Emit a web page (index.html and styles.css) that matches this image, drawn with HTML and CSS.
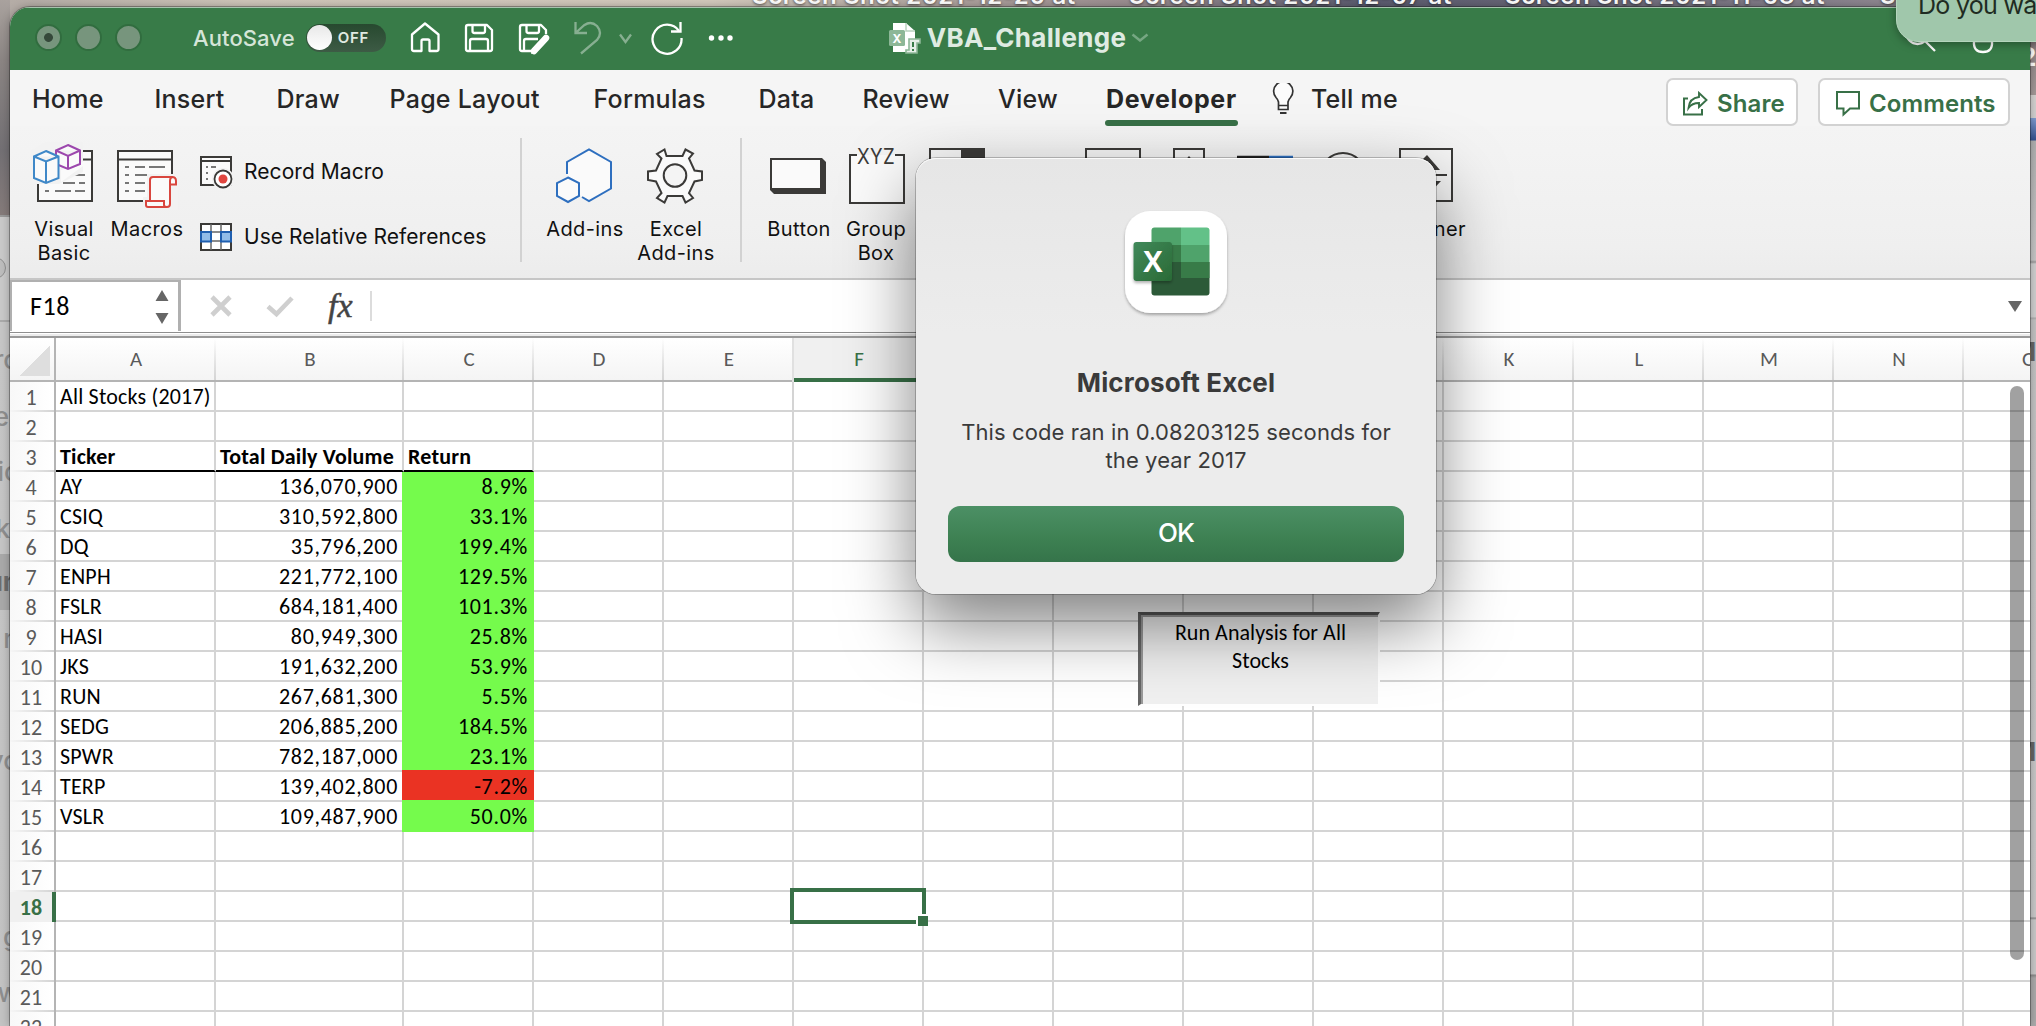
FILE: index.html
```html
<!DOCTYPE html>
<html lang="en">
<head>
<meta charset="utf-8">
<title>VBA_Challenge</title>
<link rel="stylesheet" href="styles.css">
</head>
<body>
<div class="desktop-labels"><span>Screen Shot 2021-12-20 at</span><span>Screen Shot 2021-12-07 at</span><span>Screen Shot 2021-11-08 at</span><span>S</span></div>
<div class="behind-left">
  <i class="dot"></i>
  <b style="top:343px">ro</b><b style="top:400px">er</b><b style="top:455px">ic</b><b style="top:512px">kt</b><b class="sel" style="top:564px">un</b><b style="top:622px">n</b><b style="top:744px">vo</b><b style="top:920px">g</b><b style="top:976px">w</b>
</div>
<div class="behind-right"><b style="top:40px" class="w">2</b><b style="top:335px">M</b><b style="top:735px">M</b></div>

<div class="window">
  <header class="titlebar">
    <div class="lights"><i class="edited"></i><i></i><i></i></div>
    <span class="autosave">AutoSave</span>
    <span class="toggle"><i></i>OFF</span>
    <svg class="qa" viewBox="410 20 324 36" width="324" height="36">
      <g fill="none" stroke="#fff" stroke-width="2.3" stroke-linejoin="round">
        <path d="M413 34.5L426 23.5L439.500 34.500V49q0 2-2 2H430.500V41q0-1.500-1.500-1.500H424q-1.500 0-1.500 1.500V51H415q-2 0-2-2Z"/>
        <path d="M469 25H488L493 30V49q0 2-2 2H469q-2 0-2-2V27q0-2 2-2ZM473.500 25V31q0 2 2 2H484q2 0 2-2V25M471 51V41q0-2 2-2H487q2 0 2 2V51"/>
        <path d="M532 51H523q-2 0-2-2V27q0-2 2-2H542L547 30V34M527.500 25V31q0 2 2 2H538q2 0 2-2V25M525 51V41q0-2 2-2H539"/>
      </g>
      <path d="M547 38L535 51" stroke="#fff" stroke-width="6.500" stroke-linecap="round"/><path d="M532 54L533.500 48L538 52Z" fill="#fff"/>
      <g fill="none" stroke="#fff" stroke-opacity=".4" stroke-width="2.300"><path d="M576.500 22V33H588M577 32.500L585.500 25Q592 20.500 598 26Q604 33 598 40L582 53.500"/><path d="M621 34.500L626.500 42L632 34.500"/></g>
      <g fill="none" stroke="#fff" stroke-width="2.300"><path d="M680 31A14.500 14.500 0 1 0 682.500 38"/><path d="M681.500 22V31.500H672"/></g>
      <g fill="#fff"><circle cx="712.500" cy="38" r="2.700"/><circle cx="722" cy="38" r="2.700"/><circle cx="731" cy="38" r="2.700"/></g>
    </svg>
    <div class="doc">
      <svg viewBox="889 22 34 32" width="34" height="32"><path d="M894 23H907L916 31V52H894Z" fill="#fff"/><path d="M907 23V31H916" fill="none" stroke="#b9d2be" stroke-width="1.500"/><rect x="890" y="30" width="16" height="16" rx="1.500" fill="#8db797"/><text x="898" y="42.500" text-anchor="middle" font-family="Inter" font-weight="700" font-size="12" fill="#fff">X</text><path d="M910 39H921V43H918V53H907V50H910Z" fill="#e6efe8" stroke="#8db797" stroke-width="1.600"/><path d="M914 42V47M914 49V51" stroke="#387b48" stroke-width="2"/></svg>
      <span>VBA_Challenge</span>
      <svg viewBox="1133 34 18 9" width="18" height="9"><path d="M1134.500 35.500L1142 41.500L1149.500 35.500" fill="none" stroke="#76a782" stroke-width="2.500"/></svg>
    </div>
    <svg class="right-icons" viewBox="1905 22 92 34" width="92" height="34"><g fill="none" stroke="#fff" stroke-width="2.300"><circle cx="1918.500" cy="34" r="11"/><path d="M1926 42L1936 52"/><circle cx="1984" cy="28" r="6"/><path d="M1975 42H1993Q1994 53 1984 53Q1974 53 1975 42Z"/></g></svg>
  </header>

  <nav class="tabs">
    <span>Home</span><span>Insert</span><span>Draw</span><span>Page Layout</span><span>Formulas</span><span>Data</span><span>Review</span><span>View</span><span class="active">Developer</span>
    <svg viewBox="1271 83 24 33" width="24" height="33"><path d="M1278.500 105.500V102Q1278 99.500 1276 97.500A9.600 9.600 0 1 1 1290.500 97.500Q1288.500 99.500 1288 102V105.500ZM1278.500 105.500V109.500H1288V105.500" fill="#fbfbfb" stroke="#333" stroke-width="1.700"/><path d="M1280 113H1286.500" stroke="#333" stroke-width="2"/></svg>
    <span>Tell me</span>
    <div class="actions">
      <button class="share"><svg viewBox="1682 90 26 25" width="26" height="25"><path d="M1688 97.500H1684V113.500H1702V108" fill="none" stroke="#387047" stroke-width="2"/><path d="M1699 92L1706.500 99L1699 106V102Q1692 102 1688.500 107Q1689.500 97 1699 96Z" fill="none" stroke="#387047" stroke-width="1.900"/></svg>Share</button>
      <button class="comments"><svg viewBox="1835 89 26 27" width="26" height="27"><path d="M1837 91H1859V107.500H1850L1843.500 113.500V107.500H1837Z" fill="none" stroke="#387047" stroke-width="2"/></svg>Comments</button>
    </div>
  </nav>

  <section class="ribbon">
    <div class="tool vb"><svg viewBox="32 142 64 64" width="64" height="64"><path d="M39 151H93V201H39Z" fill="#fafafa" stroke="#3b3a38" stroke-width="2"/><path d="M39 159.500H93" stroke="#3b3a38" stroke-width="2"/><path d="M76 175H86M64 183H76M80 183H86M46 191H50M56 191H72M76 191H86" stroke="#777" stroke-width="2"/><path d="M32 150L47 142H84V172L60 184H32Z" fill="#f2f2f2"/><path d="M62 182V170L84 162V166Z" fill="#fafafa"/><path d="M69 145L81 150.500V164L69 169L57 164V150.500ZM57 150.500L69 156L81 150.500M69 156V169" fill="#fafafa" stroke="#9c47ad" stroke-width="2"/><path d="M47 151L59.500 156.500V178L47 183L35 178V156.500ZM35 156.500L47 161.500L59.500 156.500M47 161.500V183" fill="#fafafa" stroke="#3f88c8" stroke-width="2"/></svg><span>Visual<br>Basic</span></div>
    <div class="tool mac"><svg viewBox="115 142 64 68" width="64" height="68"><path d="M119 151H173V201H119Z" fill="#fafafa" stroke="#3b3a38" stroke-width="2"/><path d="M119 159.500H173" stroke="#3b3a38" stroke-width="2"/><path d="M126 167H130M136 167H146M150 167H166M126 175H130M136 175H150M154 175H166M126 183H130M136 183H146M126 191H130M136 191H146" stroke="#777" stroke-width="2"/><path d="M148 174H180V210H144V197H148Z" fill="#f2f2f2"/><path d="M151 200V180Q151 177 154 177H173Q177 177 177 181V184.500H171V204Q171 207 168 207H149Q147 207 147 205V201H165V205Q165 207 168 207M171 184.500V181Q171 177 174 177" fill="#fafafa" stroke="#d9463e" stroke-width="2"/></svg><span>Macros</span></div>
    <div class="stack">
      <div><svg viewBox="199 155 34 34" width="34" height="34"><path d="M201 157H231V185H201Z" fill="#fafafa" stroke="#3b3a38" stroke-width="2"/><path d="M201 161H231" stroke="#3b3a38" stroke-width="2"/><path d="M206 167H208M211 167H216M206 173H208M206 179H208" stroke="#777" stroke-width="2"/><circle cx="223" cy="179" r="11" fill="#f2f2f2"/><circle cx="223" cy="179" r="8.500" fill="#fff" stroke="#3b3a38" stroke-width="1.800"/><circle cx="223" cy="179" r="4.500" fill="#e0463f"/></svg>Record Macro</div>
      <div><svg viewBox="199 220 34 32" width="34" height="32"><path d="M201 223H231V249H201Z" fill="#fff" stroke="#3b3a38" stroke-width="2"/><path d="M211 223V249M221 223V249M201 231H231M201 240H231" stroke="#666" stroke-width="1.500"/><path d="M201 231H211V240.500H201ZM221 231H231V240.500H221Z" fill="#91bce8" stroke="#1f5fb0" stroke-width="2"/></svg>Use Relative References</div>
    </div>
    <i class="sep"></i>
    <div class="tool add"><svg viewBox="554 146 60 60" width="60" height="60"><path d="M567 174V162L589 149.500L611 162V188.500L589 201L582 197" fill="#fafafa" stroke="#2e6fbf" stroke-width="2"/><path d="M567 174L582 197V180Z" fill="#fafafa"/><path d="M568 177.500L579 183V196L568 202L557 196V183Z" fill="#fafafa" stroke="#2e6fbf" stroke-width="2"/></svg><span>Add-ins</span></div>
    <div class="tool xadd"><svg viewBox="645 146 60 60" width="60" height="60"><path d="M666.500 156L664.500 149.500L657 154L661.500 158.500L656 170.500L648 171.500V180L656 181.500L661.500 193L657 198L664.500 202.500L667.500 196H682.500L685.500 202.500L693 198L689 193L694.500 181.500L702 180V171.500L694.500 170.500L689 158.500L693 153.500L685.500 149.500L682.500 156Z" fill="#fafafa" stroke="#3b3a38" stroke-width="2"/><circle cx="675" cy="175.500" r="11.300" fill="#f4f4f4" stroke="#3b3a38" stroke-width="2"/></svg><span>Excel<br>Add-ins</span></div>
    <i class="sep s2"></i>
    <div class="tool btn"><svg viewBox="768 154 60 44" width="60" height="44"><path d="M770 158H822L826 162V194H774L770 190Z" fill="#3b3a38"/><path d="M772 160H820V188H772Z" fill="#fafafa"/></svg><span>Button</span></div>
    <div class="tool grp"><svg viewBox="846 144 60 62" width="60" height="62"><path d="M857 155H850V203H904V155H895" fill="#fafafa" stroke="#3b3a38" stroke-width="2"/><text x="876" y="164" text-anchor="middle" font-family="Inter" font-size="21.500" textLength="38" lengthAdjust="spacingAndGlyphs" fill="#3b3a38">XYZ</text></svg><span>Group<br>Box</span></div>
    <div class="controls"><svg viewBox="926 144 530 62" width="530" height="62"><path d="M930 149H984V203H930ZM1086 149H1140V203H1086ZM1174 149H1204V203H1174ZM1400 149H1452V201H1400Z" fill="#f5f5f5" stroke="#3b3a38" stroke-width="2"/><path d="M961 149H985V170H961Z" fill="#3b3a38"/><path d="M1189 156L1195 163H1183Z" fill="#3b3a38"/><path d="M1237 157H1269" stroke="#222" stroke-width="2.500"/><path d="M1269 157H1293" stroke="#2e6fbf" stroke-width="2.500"/><circle cx="1343" cy="175" r="22" fill="#f5f5f5" stroke="#3b3a38" stroke-width="2"/><path d="M1421 161L1427 155L1440 170H1431Z" fill="#3b3a38"/><path d="M1410 175H1447" stroke="#3b3a38" stroke-width="2"/><path d="M1412 181H1441L1426 197Z" fill="#3b3a38"/></svg><span>Spinner</span></div>
  </section>

  <section class="formula">
    <div class="namebox"><span>F18</span><svg viewBox="156 288 15 36" width="15" height="36"><path d="M156.500 300L163 289L169.500 300ZM156.500 312H169.500L163 323Z" fill="#666"/></svg></div>
    <svg class="fxbuttons" viewBox="208 294 88 26" width="88" height="26"><path d="M212 298L230 316M230 298L212 316M268 307.500L276.500 315L292 299" fill="none" stroke="#cfcfcf" stroke-width="4.600"/></svg>
    <span class="fx">fx</span><i></i>
    <svg class="drop" viewBox="2007 299 16 13" width="16" height="13"><path d="M2008 301H2022L2015 312Z" fill="#666"/></svg>
  </section>
  <div class="splitter"></div>

  <section class="sheet">
    <div class="colheads"><span class="corner"></span><span>A</span><span>B</span><span>C</span><span>D</span><span>E</span><span class="on">F</span><span>G</span><span>H</span><span>I</span><span>J</span><span>K</span><span>L</span><span>M</span><span>N</span><span>O</span></div>
    <div class="row"><b>1</b><span>All Stocks (2017)</span><span></span><span></span><i></i></div>
    <div class="row"><b>2</b><span></span><span></span><span></span><i></i></div>
    <div class="row head"><b>3</b><span>Ticker</span><span>Total Daily Volume</span><span>Return</span><i></i></div>
    <div class="row data"><b>4</b><span>AY</span><span>136,070,900</span><span>8.9%</span><i></i></div>
    <div class="row data"><b>5</b><span>CSIQ</span><span>310,592,800</span><span>33.1%</span><i></i></div>
    <div class="row data"><b>6</b><span>DQ</span><span>35,796,200</span><span>199.4%</span><i></i></div>
    <div class="row data"><b>7</b><span>ENPH</span><span>221,772,100</span><span>129.5%</span><i></i></div>
    <div class="row data"><b>8</b><span>FSLR</span><span>684,181,400</span><span>101.3%</span><i></i></div>
    <div class="row data"><b>9</b><span>HASI</span><span>80,949,300</span><span>25.8%</span><i></i></div>
    <div class="row data"><b>10</b><span>JKS</span><span>191,632,200</span><span>53.9%</span><i></i></div>
    <div class="row data"><b>11</b><span>RUN</span><span>267,681,300</span><span>5.5%</span><i></i></div>
    <div class="row data"><b>12</b><span>SEDG</span><span>206,885,200</span><span>184.5%</span><i></i></div>
    <div class="row data"><b>13</b><span>SPWR</span><span>782,187,000</span><span>23.1%</span><i></i></div>
    <div class="row data loss"><b>14</b><span>TERP</span><span>139,402,800</span><span>-7.2%</span><i></i></div>
    <div class="row data"><b>15</b><span>VSLR</span><span>109,487,900</span><span>50.0%</span><i></i></div>
    <div class="row"><b>16</b><span></span><span></span><span></span><i></i></div>
    <div class="row"><b>17</b><span></span><span></span><span></span><i></i></div>
    <div class="row on"><b>18</b><span></span><span></span><span></span><i></i></div>
    <div class="row"><b>19</b><span></span><span></span><span></span><i></i></div>
    <div class="row"><b>20</b><span></span><span></span><span></span><i></i></div>
    <div class="row"><b>21</b><span></span><span></span><span></span><i></i></div>
    <div class="row"><b>22</b><span></span><span></span><span></span><i></i></div>
    <div class="selection"><i></i></div>
    <div class="run">Run Analysis for All<br>Stocks</div>
    <div class="scrollbar"></div>
  </section>
</div>

<div class="dialog">
  <svg viewBox="1115 201 122 124" width="122" height="124">
    <defs>
      <linearGradient id="tile" x1="0" y1="0" x2="1" y2="1"><stop offset="0" stop-color="#40895a"/><stop offset="1" stop-color="#2a6a36"/></linearGradient>
      <filter id="soft" x="-30%" y="-30%" width="160%" height="160%"><feDropShadow dx="0" dy="2" stdDeviation="1.500" flood-opacity=".3"/></filter>
      <clipPath id="book"><rect x="1151.500" y="227.500" width="58" height="68" rx="3"/></clipPath>
    </defs>
    <rect x="1125" y="211" width="102" height="102" rx="25" fill="#fff" filter="url(#soft)"/>
    <g clip-path="url(#book)"><path d="M1151 227H1181V245H1151Z" fill="#4fa36b"/><path d="M1181 227H1210V245H1181Z" fill="#63c188"/><path d="M1151 245H1181V262H1151Z" fill="#387b48"/><path d="M1181 245H1210V262H1181Z" fill="#4fa36b"/><path d="M1151 262H1210V296H1151Z" fill="#2c5a38"/><path d="M1181 262H1210V278H1181Z" fill="#387b48"/></g>
    <rect x="1133.500" y="242" width="38.500" height="39" rx="3" fill="url(#tile)" filter="url(#soft)"/>
    <text x="1152.800" y="272" text-anchor="middle" font-family="Open Sans" font-weight="700" font-size="29" fill="#fff">X</text>
  </svg>
  <h1>Microsoft Excel</h1>
  <p>This code ran in 0.08203125 seconds for<br>the year 2017</p>
  <button>OK</button>
</div>
<div class="notice">Do you want</div>
</body>
</html>
```
FILE: styles.css
```css
* { box-sizing: border-box; }
html, body { height: 100%; }
body {
  margin: 0; padding: 7px 6px 0 10px; overflow: hidden; position: relative;
  font-family: Inter, "Liberation Sans", sans-serif; color: #262626;
  background: linear-gradient(90deg, #b3aba5 0, #cfc6ba 12%, #d3cabd 35%, #b0a49f 46%, #9a8d90 56%, #5c5c70 67%, #6b6878 78%, #8d8690 92%, #9a9090 100%);
}
svg { display: block; flex: none; }
button { font-family: inherit; margin: 0; padding: 0; }

.desktop-labels span { position: absolute; top: -19px; white-space: nowrap; font-size: 24px; line-height: 29px; font-weight: 600; letter-spacing: .6px; color: #fff; text-shadow: 0 1px 3px rgba(0,0,0,.6); }
.desktop-labels span:nth-child(1) { left: 752px; }
.desktop-labels span:nth-child(2) { left: 1129px; }
.desktop-labels span:nth-child(3) { left: 1505px; }
.desktop-labels span:nth-child(4) { left: 1880px; }

.behind-left, .behind-right { position: absolute; top: 0; bottom: 0; overflow: hidden; }
.behind-left { left: 0; width: 10px; background: linear-gradient(#a9a29e 0, #8c8684 60px, #737074 150px, #857b7a 215px, #999 215px, #999 217px, #c9c9c9 217px, #c9c9c9 320px, #aaa 320px, #aaa 322px, #c6c6c6 322px, #c3c3c3 100%); }
.behind-right { right: 0; width: 7px; background: linear-gradient(#3d8050 0, #8d8083 42px, #a39a98 95px, #d5d2d0 95px, #d0d0d0 118px, #7e9bd0 118px, #35518f 140px, #b0b0b0 141px, #c6c6c6 260px, #9a9a9a 262px, #cfcfcf 264px, #cfcfcf 317px, #aaa 318px, #c2c2c2 320px, #c9c9c9 917px, #888 918px, #c9c9c9 920px, #c9c9c9 974px, #888 975px, #aaa 978px); }
.behind-left b, .behind-right b { position: absolute; font-size: 26px; line-height: 34px; font-weight: 500; color: #8f8f8f; }
.behind-left b { right: -9px; }
.behind-right b { left: -17px; color: #666; font-weight: 700; }
.behind-right b.w { left: -9px; color: #fff; }
.behind-left b.sel { right: -9px; width: 19px; height: 56px; margin-top: -10px; line-height: 56px; direction: rtl; background: #a9a9a9; color: #6d6d6d; font-weight: 700; }
.dot { position: absolute; left: -16px; top: 257px; width: 22px; height: 22px; border: 1px solid #8f8f8f; border-radius: 50%; background: #bdbdbd; }

.window { position: relative; width: 2020px; height: 1019px; overflow: hidden; border-radius: 20px 20px 0 0; background: #fff; box-shadow: 0 0 0 1px rgba(0,0,0,.3), 0 0 10px rgba(0,0,0,.3); }

.titlebar { height: 63px; padding: 0 34px 3px 25px; display: flex; align-items: center; background: #387b48; border-top: 1px solid #a6c3ad; color: #d5e5d8; }
.lights { display: flex; gap: 13px; }
.lights i { width: 27px; height: 27px; border-radius: 50%; background: #77957d; border: 2px solid #316d3f; }
.lights .edited { background: radial-gradient(circle, #35493a 0 4px, #77957d 4.800px); }
.autosave { margin-left: 51px; font-size: 22px; font-weight: 500; letter-spacing: .1px; }
.toggle { margin-left: 11px; width: 80px; height: 28px; border-radius: 14px; display: flex; align-items: center; gap: 6px; padding-left: 1px; background: linear-gradient(#27492f, #3d5b45); font-size: 15px; font-weight: 600; letter-spacing: .7px; color: #e0eae2; }
.toggle i { width: 25px; height: 25px; border-radius: 50%; background: linear-gradient(#e8e8e8, #fff); }
.qa { margin-left: 23px; }
.doc { margin-left: 155px; display: flex; align-items: center; gap: 5px; font-size: 26px; font-weight: 700; letter-spacing: .3px; color: #dfebe2; }
.right-icons { margin-left: auto; }

.tabs { position: relative; height: 56px; padding-left: 22px; display: grid; grid-template-columns: 122.5px 122px 113px 204px 165px 104px 135.500px 108px 165px 40px 1fr; align-items: center; font-size: 25px; font-weight: 500; line-height: 56px; padding-top: 1px; background: #f5f5f5; letter-spacing: .25px; white-space: nowrap; }
.tabs .active { font-weight: 700; letter-spacing: .65px; justify-self: start; position: relative; }
.tabs .active::after { content: ""; position: absolute; left: -1px; right: -1px; bottom: 1px; height: 6px; border-radius: 3px; background: #387047; }
.actions { position: absolute; right: 20px; top: 8px; display: flex; gap: 20px; }
.actions button { height: 48px; display: flex; align-items: center; border: 2px solid #d2d2d2; border-radius: 7px; background: #fff; color: #387047; font-size: 24px; font-weight: 600; letter-spacing: .1px; padding-top: 2px; }
.actions .share { width: 132px; padding-left: 14px; gap: 9px; }
.actions .comments { width: 192px; padding-left: 15px; gap: 8px; }

.ribbon { position: relative; height: 154px; display: flex; background: linear-gradient(#f4f4f4, #efefef 80%, #ececec); border-bottom: 2px solid #c6c6c6; color: #111; font-size: 20px; line-height: 24px; letter-spacing: .4px; }
.tool, .controls { position: relative; display: grid; grid-template-rows: 91px auto; justify-items: center; align-content: start; text-align: center; }
.tool svg { align-self: end; margin-bottom: 10px; }
.vb { width: 76px; margin-left: 16px; }
.vb svg { margin-bottom: 11px; margin-right: 2px; }
.mac { width: 88px; margin-left: 1px; }
.mac svg { margin-bottom: 7px; margin-right: 2px; }
.stack { margin-left: 8px; padding-top: 29px; width: 321px; display: flex; flex-direction: column; gap: 32px; font-size: 21px; letter-spacing: .06px; }
.stack div { display: flex; align-items: center; gap: 11px; height: 33px; white-space: nowrap; }
.stack div:first-child { padding-top: 1px; }
.sep { width: 2px; height: 124px; margin-top: 12px; background: #d2d2d2; }
.add { width: 90px; margin-left: 18px; }
.add svg, .xadd svg, .grp svg { margin-bottom: 11px; }
.add svg, .xadd svg { margin-right: 2px; }
.xadd { width: 92px; }
.s2 { margin-left: 18px; }
.btn { width: 82px; margin-left: 16px; }
.btn svg { margin-bottom: 19px; margin-right: 2px; }
.grp { width: 72px; }
.controls { margin-left: 14px; justify-items: end; }
.controls svg { margin-top: 18px; }
.controls span { margin-right: -10px; }

.formula { height: 53px; display: flex; align-items: center; background: #fff; border-bottom: 1px solid #8e8e8e; padding-bottom: 1px; }
.namebox { align-self: stretch; width: 171px; display: flex; align-items: center; justify-content: space-between; padding: 0 8px 0 18px; border: 2px solid #b0b0b0; border-bottom: 0; border-right-width: 3px; font: 26px/40px Carlito, Lato, sans-serif; color: #000; letter-spacing: .6px; }
.namebox span { padding-bottom: 2px; }
.fxbuttons { margin-left: 27px; }
.fx { margin-left: 32px; width: 42px; font: italic 400 34px/40px "Liberation Serif", serif; color: #444; -webkit-text-stroke: .5px #444; }
.formula > i { width: 2px; height: 30px; background: #dcdcdc; }
.drop { margin-left: auto; margin-right: 7px; }
.splitter { height: 5px; background: #ececec; border-bottom: 2px solid #999; box-shadow: inset 0 1px 0 #fff; }

.sheet { position: relative; font: 22px/28px Carlito, Lato, sans-serif; color: #000; }
.colheads { display: flex; height: 44px; background: linear-gradient(#fff, #f4f4f4); border-bottom: 2px solid #b4b4b4; color: #5a5a5a; font-size: 21px; line-height: 43px; }
.colheads span { flex: none; width: 130px; text-align: center; background: linear-gradient(rgba(212,212,212,0), #d4d4d4) right / 2px 100% no-repeat; }
.colheads span:nth-child(2) { width: 160px; }
.colheads span:nth-child(3) { width: 188px; }
.colheads .corner { width: 46px; border-right: 2px solid #b4b4b4; background: linear-gradient(135deg, transparent 50%, #dedede 50%) 10px 8px / 30px 30px no-repeat; }
.colheads .on { height: 44px; background: #f0f0f0; border-bottom: 4px solid #387047; color: #387047; box-shadow: -2px 0 #e0e0e0; }
.row { display: flex; height: 30px; }
.row b { width: 46px; text-align: center; font-weight: 400; padding-right: 2px; color: #5a5a5a; line-height: 31px; border-right: 2px solid #b4b4b4; background: linear-gradient(90deg, #f6f6f6, #d4d4d4) bottom / 100% 2px no-repeat, linear-gradient(90deg, #f8f8f8, #fff); }
.row span { flex: none; width: 130px; padding: 0 0 0 4px; line-height: 30px; white-space: nowrap; border-right: 2px solid #d4d4d4; border-bottom: 2px solid #d4d4d4; letter-spacing: .2px; }
.row span:nth-child(2) { width: 160px; }
.row span:nth-child(3) { width: 188px; }
.row i { flex: 1; border-bottom: 2px solid #d4d4d4; background: repeating-linear-gradient(90deg, transparent 0 128px, #d4d4d4 128px 130px); }
.head span { font-weight: 700; border-bottom-color: #000; }
.data span:nth-child(n+3) { text-align: right; letter-spacing: .7px; }
.data span:nth-child(3) { padding-right: 4px; }
.data span:nth-child(4) { position: relative; width: 132px; margin-left: -2px; padding-right: 4px; background: #75fb4c; border-color: #75fb4c; }
.data.loss span:nth-child(4) { background: #ea3323; border-color: #ea3323 #ea3323 #75fb4c; }
.data.loss span:nth-child(4) { border: 0; padding-right: 6px; background: linear-gradient(#ea3323 28px, #75fb4c 28px); }
.data.loss span:nth-child(4)::before { content: ""; position: absolute; left: 0; right: 0; top: -2px; height: 2px; background: #ea3323; }
.row.on b { color: #387047; font-weight: 700; border-right: 4px solid #387047; padding-right: 0; background: #f0f0f0; }

.selection { position: absolute; left: 780px; top: 550px; width: 136px; height: 36px; border: 4px solid #387047; }
.selection i { position: absolute; right: -6px; bottom: -6px; width: 10px; height: 10px; box-sizing: content-box; background: #387047; border: 2px solid #fff; border-right: 0; border-bottom: 0; }
.run { position: absolute; left: 1128px; top: 274px; width: 242px; height: 94px; padding: 4px 0 0 2px; text-align: center; font-size: 22px; line-height: 28px; letter-spacing: .05px; background: #f0f0f0; border: solid #fff; border-width: 3px 2px 2px 3px; border-top-color: #555; border-left-color: #666; box-shadow: inset 2px 2px #9a9a9a; }
.scrollbar { position: absolute; left: 2000px; top: 48px; width: 14px; height: 574px; border-radius: 7px; background: rgba(0,0,0,.37); }

.dialog { position: absolute; left: 916px; top: 158px; width: 520px; height: 436px; padding: 43px 32px 0; border-radius: 20px; background: linear-gradient(#e6e6e6, #ececec 40%); box-shadow: 0 0 0 1px rgba(0,0,0,.22), inset 0 1px #fafafa, 0 30px 70px rgba(0,0,0,.5); text-align: center; color: #3a3a3a; }
.dialog svg { margin: 0 auto; }
.dialog h1 { margin: 41px 0 0; font-size: 26px; line-height: 34px; font-weight: 700; letter-spacing: .15px; }
.dialog p { margin: 18px -10px 0; font-size: 22px; line-height: 28px; letter-spacing: .1px; }
.dialog button { margin-top: 32px; width: 456px; height: 56px; padding-bottom: 4px; border: 0; border-radius: 12px; background: linear-gradient(#4c9065, #3d8052 60%, #35744a); color: #fff; font-size: 26px; font-weight: 500; letter-spacing: -.8px; }

.notice { position: absolute; left: 1896px; top: -40px; width: 200px; height: 82px; border-radius: 22px; padding: 27px 0 0 21px; white-space: nowrap; font-size: 25px; line-height: 34px; letter-spacing: -.7px; color: #1f2c22; background: #a0c7ab; border: 1px solid #b5d5bd; box-shadow: 0 2px 10px rgba(0,0,0,.35); }
```
